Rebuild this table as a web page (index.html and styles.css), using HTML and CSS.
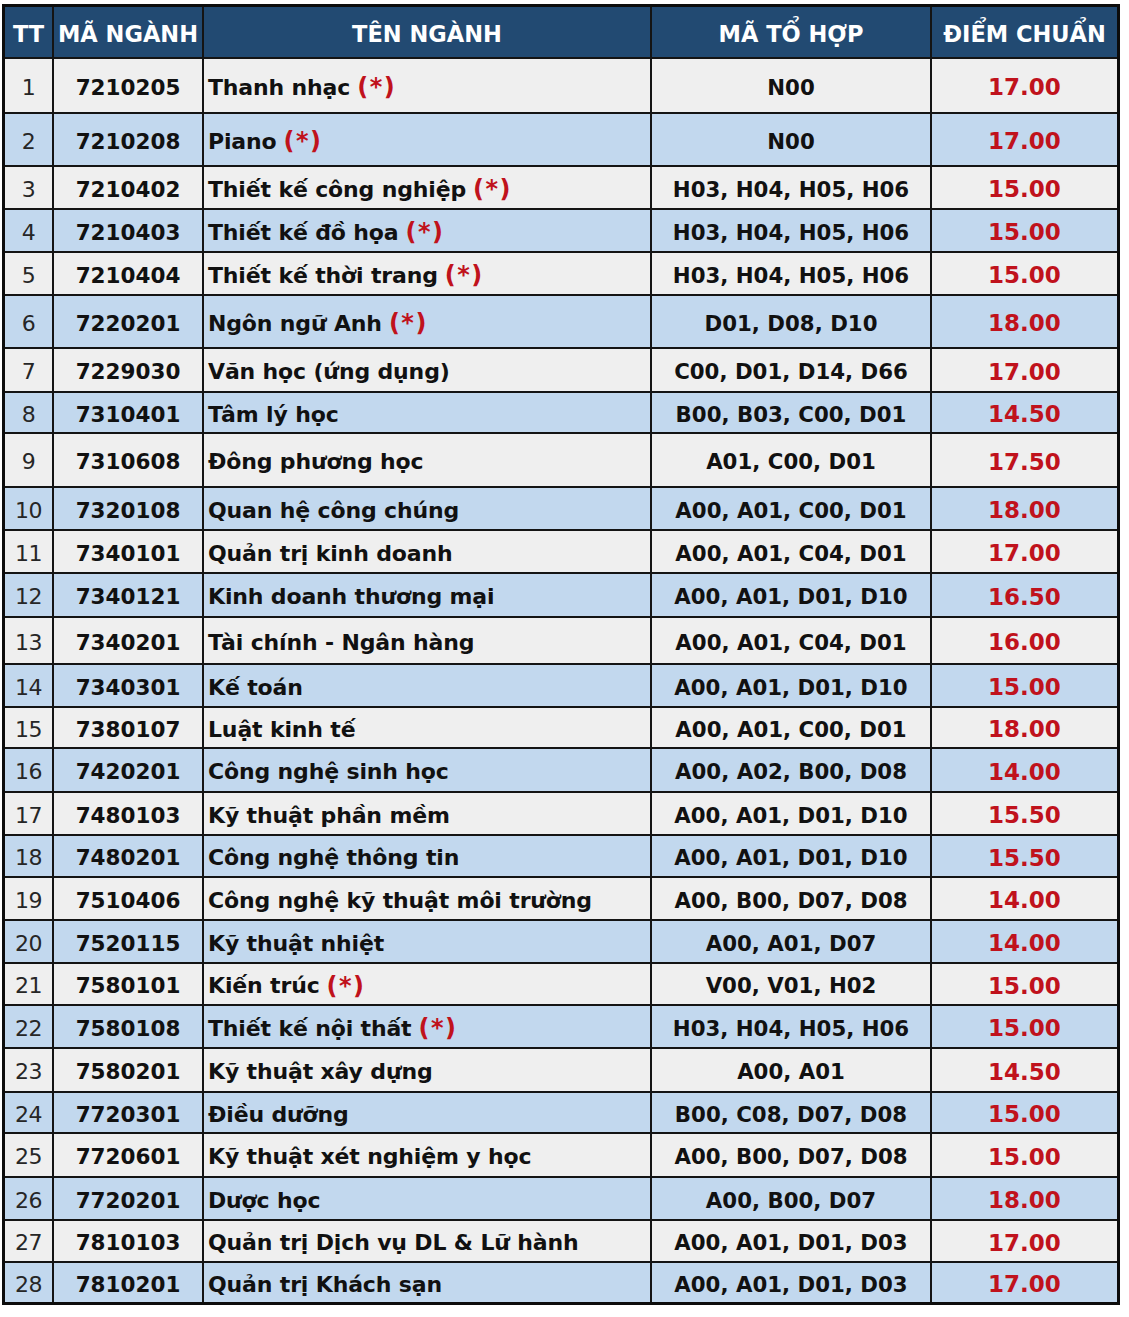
FILE: index.html
```html
<!DOCTYPE html>
<html lang="vi">
<head>
<meta charset="utf-8">
<title>Điểm chuẩn</title>
<link rel="stylesheet" href="styles.css">
</head>
<body>
<div class="table">
  <div class="th">TT</div><div class="th">MÃ NGÀNH</div><div class="th">TÊN NGÀNH</div><div class="th">MÃ TỔ HỢP</div><div class="th">ĐIỂM CHUẨN</div>

  <div class="c tt odd">1</div><div class="c code odd">7210205</div><div class="c name odd">Thanh nhạc <span class="star">(*)</span></div><div class="c combo odd">N00</div><div class="c score odd">17.00</div>
  <div class="c tt even">2</div><div class="c code even">7210208</div><div class="c name even">Piano <span class="star">(*)</span></div><div class="c combo even">N00</div><div class="c score even">17.00</div>
  <div class="c tt odd">3</div><div class="c code odd">7210402</div><div class="c name odd">Thiết kế công nghiệp <span class="star">(*)</span></div><div class="c combo odd">H03, H04, H05, H06</div><div class="c score odd">15.00</div>
  <div class="c tt even">4</div><div class="c code even">7210403</div><div class="c name even">Thiết kế đồ họa <span class="star">(*)</span></div><div class="c combo even">H03, H04, H05, H06</div><div class="c score even">15.00</div>
  <div class="c tt odd">5</div><div class="c code odd">7210404</div><div class="c name odd">Thiết kế thời trang <span class="star">(*)</span></div><div class="c combo odd">H03, H04, H05, H06</div><div class="c score odd">15.00</div>
  <div class="c tt even">6</div><div class="c code even">7220201</div><div class="c name even">Ngôn ngữ Anh <span class="star">(*)</span></div><div class="c combo even">D01, D08, D10</div><div class="c score even">18.00</div>
  <div class="c tt odd">7</div><div class="c code odd">7229030</div><div class="c name odd">Văn học (ứng dụng)</div><div class="c combo odd">C00, D01, D14, D66</div><div class="c score odd">17.00</div>
  <div class="c tt even">8</div><div class="c code even">7310401</div><div class="c name even">Tâm lý học</div><div class="c combo even">B00, B03, C00, D01</div><div class="c score even">14.50</div>
  <div class="c tt odd">9</div><div class="c code odd">7310608</div><div class="c name odd">Đông phương học</div><div class="c combo odd">A01, C00, D01</div><div class="c score odd">17.50</div>
  <div class="c tt even">10</div><div class="c code even">7320108</div><div class="c name even">Quan hệ công chúng</div><div class="c combo even">A00, A01, C00, D01</div><div class="c score even">18.00</div>
  <div class="c tt odd">11</div><div class="c code odd">7340101</div><div class="c name odd">Quản trị kinh doanh</div><div class="c combo odd">A00, A01, C04, D01</div><div class="c score odd">17.00</div>
  <div class="c tt even">12</div><div class="c code even">7340121</div><div class="c name even">Kinh doanh thương mại</div><div class="c combo even">A00, A01, D01, D10</div><div class="c score even">16.50</div>
  <div class="c tt odd">13</div><div class="c code odd">7340201</div><div class="c name odd">Tài chính - Ngân hàng</div><div class="c combo odd">A00, A01, C04, D01</div><div class="c score odd">16.00</div>
  <div class="c tt even">14</div><div class="c code even">7340301</div><div class="c name even">Kế toán</div><div class="c combo even">A00, A01, D01, D10</div><div class="c score even">15.00</div>
  <div class="c tt odd">15</div><div class="c code odd">7380107</div><div class="c name odd">Luật kinh tế</div><div class="c combo odd">A00, A01, C00, D01</div><div class="c score odd">18.00</div>
  <div class="c tt even">16</div><div class="c code even">7420201</div><div class="c name even">Công nghệ sinh học</div><div class="c combo even">A00, A02, B00, D08</div><div class="c score even">14.00</div>
  <div class="c tt odd">17</div><div class="c code odd">7480103</div><div class="c name odd">Kỹ thuật phần mềm</div><div class="c combo odd">A00, A01, D01, D10</div><div class="c score odd">15.50</div>
  <div class="c tt even">18</div><div class="c code even">7480201</div><div class="c name even">Công nghệ thông tin</div><div class="c combo even">A00, A01, D01, D10</div><div class="c score even">15.50</div>
  <div class="c tt odd">19</div><div class="c code odd">7510406</div><div class="c name odd">Công nghệ kỹ thuật môi trường</div><div class="c combo odd">A00, B00, D07, D08</div><div class="c score odd">14.00</div>
  <div class="c tt even">20</div><div class="c code even">7520115</div><div class="c name even">Kỹ thuật nhiệt</div><div class="c combo even">A00, A01, D07</div><div class="c score even">14.00</div>
  <div class="c tt odd">21</div><div class="c code odd">7580101</div><div class="c name odd">Kiến trúc <span class="star">(*)</span></div><div class="c combo odd">V00, V01, H02</div><div class="c score odd">15.00</div>
  <div class="c tt even">22</div><div class="c code even">7580108</div><div class="c name even">Thiết kế nội thất <span class="star">(*)</span></div><div class="c combo even">H03, H04, H05, H06</div><div class="c score even">15.00</div>
  <div class="c tt odd">23</div><div class="c code odd">7580201</div><div class="c name odd">Kỹ thuật xây dựng</div><div class="c combo odd">A00, A01</div><div class="c score odd">14.50</div>
  <div class="c tt even">24</div><div class="c code even">7720301</div><div class="c name even">Điều dưỡng</div><div class="c combo even">B00, C08, D07, D08</div><div class="c score even">15.00</div>
  <div class="c tt odd">25</div><div class="c code odd">7720601</div><div class="c name odd">Kỹ thuật xét nghiệm y học</div><div class="c combo odd">A00, B00, D07, D08</div><div class="c score odd">15.00</div>
  <div class="c tt even">26</div><div class="c code even">7720201</div><div class="c name even">Dược học</div><div class="c combo even">A00, B00, D07</div><div class="c score even">18.00</div>
  <div class="c tt odd">27</div><div class="c code odd">7810103</div><div class="c name odd">Quản trị Dịch vụ DL &amp; Lữ hành</div><div class="c combo odd">A00, A01, D01, D03</div><div class="c score odd">17.00</div>
  <div class="c tt even">28</div><div class="c code even">7810201</div><div class="c name even">Quản trị Khách sạn</div><div class="c combo even">A00, A01, D01, D03</div><div class="c score even">17.00</div>
</div>
</body>
</html>
```

FILE: styles.css
```css
html, body {
  margin: 0;
  padding: 0;
  background: #ffffff;
}

body {
  padding: 4px 0 0 2px;
  font-family: "DejaVu Sans", "Liberation Sans", sans-serif;
}

.table {
  display: grid;
  width: 1118px;
  box-sizing: border-box;
  grid-template-columns: 47px 148px 446px 278px 1fr;
  grid-template-rows:
    50px
    53px 51px 41px 41px 41px 51px 42px 39px 52px 41px
    41px 42px 45px 41px 39px 42px 41px 40px 41px 41px
    40px 41px 42px 39px 42px 41px 40px 39px;
  gap: 2px;
  background: #141414;
  border: 3px solid #0c0c0c;
}

.th {
  background: #224a72;
  color: #ffffff;
  font-weight: bold;
  font-size: 22.5px;
  display: flex;
  align-items: center;
  justify-content: center;
  white-space: nowrap;
  padding-top: 3px;
}

.c {
  display: flex;
  align-items: center;
  font-size: 21px;
  color: #111111;
  white-space: nowrap;
  padding-top: 3px;
  box-sizing: border-box;
}

.odd { background: #efefef; }
.even { background: #c2d8ee; }

.tt {
  justify-content: center;
  font-weight: normal;
  font-size: 22px;
  color: #262626;
  letter-spacing: -0.5px;
}

.code {
  justify-content: center;
  font-weight: bold;
  font-size: 21.5px;
}

.name {
  justify-content: flex-start;
  padding-left: 4px;
  font-weight: bold;
  font-size: 22px;
  letter-spacing: -0.15px;
}

.star {
  color: #c0121c;
  margin-left: 7px;
  font-size: 24px;
  letter-spacing: 1.5px;
  line-height: 1;
}

.combo {
  justify-content: center;
  font-weight: bold;
  font-size: 21.3px;
}

.score {
  justify-content: center;
  font-weight: bold;
  font-size: 23px;
  color: #c0121c;
}
```
